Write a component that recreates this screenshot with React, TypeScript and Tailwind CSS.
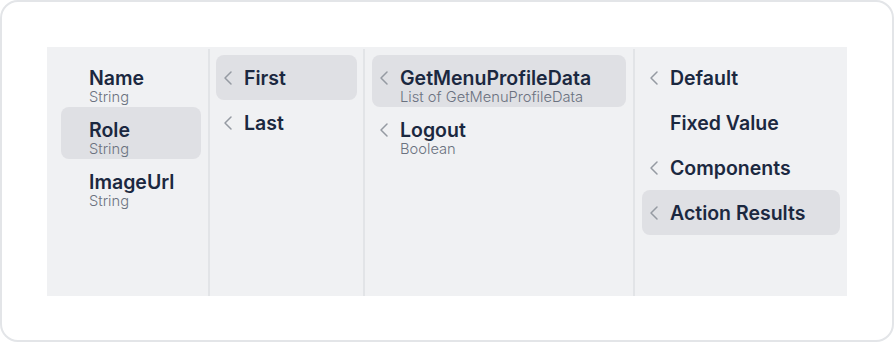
import { ChevronLeft } from "lucide-react";

type Item = { title: string; sub?: string; chevron?: boolean; active?: boolean };

const columns: { width: string; pad: string; items: Item[] }[] = [
	{
		width: "w-[163px]",
		pad: "pl-[14px] pr-[7px]",
		items: [
			{ title: "Name", sub: "String" },
			{ title: "Role", sub: "String", active: true },
			{ title: "ImageUrl", sub: "String" },
		],
	},
	{
		width: "w-[155px]",
		pad: "px-[6px]",
		items: [
			{ title: "First", chevron: true, active: true },
			{ title: "Last", chevron: true },
		],
	},
	{
		width: "w-[270px]",
		pad: "px-[7px]",
		items: [
			{ title: "GetMenuProfileData", sub: "List of GetMenuProfileData", chevron: true, active: true },
			{ title: "Logout", sub: "Boolean", chevron: true },
		],
	},
	{
		width: "flex-1",
		pad: "px-[7px]",
		items: [
			{ title: "Default", chevron: true },
			{ title: "Fixed Value" },
			{ title: "Components", chevron: true },
			{ title: "Action Results", chevron: true, active: true },
		],
	},
];

function Row({ item }: { item: Item }) {
	return (
		<div
			className={`flex min-h-[45px] rounded-[8px] pt-[11px] pb-[3px] ${
				item.active ? "bg-[#dfe0e4]" : ""
			}`}
		>
			<div className="w-[24px] h-[24px] mr-[4px] flex items-center justify-center shrink-0">
				{item.chevron && (
					<ChevronLeft className="size-6 text-[#959aa2]" strokeWidth={1.5} />
				)}
			</div>
			<div className="flex flex-col">
				<span className="text-[19.5px] leading-[24px] font-semibold text-[#1b2840]">
					{item.title}
				</span>
				{item.sub && (
					<span className="text-[14.7px] leading-[14px] font-light text-[#6b7280]">
						{item.sub}
					</span>
				)}
			</div>
		</div>
	);
}

export default function App() {
	return (
		<div
			className="w-[894px] h-[343px] bg-white"
			style={{ fontFamily: "Inter, 'Noto Sans', sans-serif" }}
		>
			<div className="w-[894px] h-[342px] border-2 border-[#e3e5e8] rounded-[18px] p-[45px]">
				{/* Mapping panel */}
				<div className="flex h-[249px] bg-[#f0f1f3] pt-[2px]">
					{columns.map((col, i) => (
						<div
							key={i}
							className={`${col.width} ${col.pad} pt-[6px] ${
								i < columns.length - 1 ? "border-r-2 border-[#e2e4e7]" : ""
							}`}
						>
							{col.items.map((item) => (
								<Row key={item.title} item={item} />
							))}
						</div>
					))}
				</div>
			</div>
		</div>
	);
}
